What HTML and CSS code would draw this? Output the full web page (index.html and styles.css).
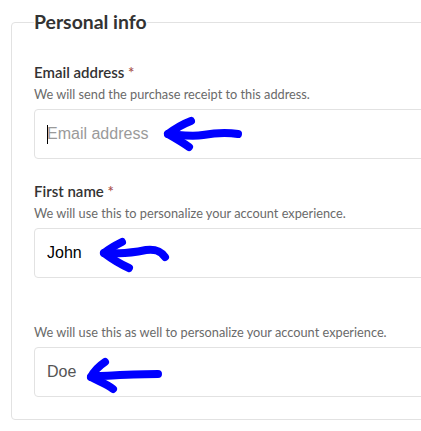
FILE: index.html
```html
<!DOCTYPE html>
<html lang="en">
<head>
<meta charset="utf-8">
<title>Personal info</title>
<link rel="stylesheet" href="styles.css">
</head>
<body>
<div class="page">
  <fieldset class="panel">
    <legend class="panel-title">Personal info</legend>

    <div class="field">
      <label class="field-label" for="email">Email address <span class="req">*</span></label>
      <p class="field-help">We will send the purchase receipt to this address.</p>
      <div class="input-wrap">
        <input class="text-input" id="email" type="email" placeholder="Email address">
        <span class="caret"></span>
      </div>
    </div>

    <div class="field">
      <label class="field-label" for="first">First name <span class="req">*</span></label>
      <p class="field-help">We will use this to personalize your account experience.</p>
      <div class="input-wrap">
        <input class="text-input filled" id="first" type="text" value="John">
      </div>
    </div>

    <div class="field">
      <label class="field-label" for="last"></label>
      <p class="field-help">We will use this as well to personalize your account experience.</p>
      <div class="input-wrap">
        <input class="text-input muted" id="last" type="text" value="Doe">
      </div>
    </div>
  </fieldset>

  <svg class="annotations" width="421" height="431" viewBox="0 0 421 431" aria-hidden="true">
    <g fill="none" stroke="#0000ff" stroke-width="8" stroke-linecap="round" stroke-linejoin="round">
      <path d="M238 134 C226 132 214 133 203 135 C192 137 180 135 168 134"/>
      <path d="M191 121 C183 124 176 128 168 134 C175 138 182 142 189 147"/>
      <path d="M165 257 C160 250 154 249 146 250 C136 252 125 254 114 253 L104 253"/>
      <path d="M122 242 C116 245 110 248 104 253 C112 259 120 264 129 268"/>
      <path d="M158 374 C140 374 122 375 98 376 L91 377"/>
      <path d="M105 362 C99 366 94 371 91 377 C98 381 107 384 113 389"/>
    </g>
  </svg>
</div>
</body>
</html>
```

FILE: styles.css
```css
html, body {
  margin: 0;
  padding: 0;
  background: #ffffff;
  overflow: hidden;
}

.page {
  position: relative;
  width: 421px;
  height: 431px;
  overflow: hidden;
  font-family: Lato, "Open Sans", sans-serif;
}

.panel {
  box-sizing: border-box;
  width: 460px;
  margin: 10px 0 0 11px;
  padding: 28px 22px 22px 22px;
  border: 1px solid #e2e2e2;
  border-radius: 4px;
  min-width: 0;
}

.panel-title {
  padding: 0;
  margin-left: 0;
  font-size: 19.4px;
  line-height: 24px;
  font-weight: 700;
  color: #333333;
}

.field + .field {
  margin-top: 22px;
}

.field-label {
  display: block;
  min-height: 20px;
  font-size: 15px;
  line-height: 20px;
  font-weight: 600;
  color: #333333;
}

.req {
  color: #a9524b;
}

.field-help {
  margin: 3px 0 0 0;
  font-size: 12.75px;
  line-height: 18px;
  color: #6a6a6a;
}

.input-wrap {
  position: relative;
  margin-top: 6px;
}

.text-input {
  box-sizing: border-box;
  display: block;
  width: 100%;
  height: 50px;
  margin: 0;
  padding: 0 12px;
  border: 1px solid #e2e2e2;
  border-radius: 4px;
  background: #ffffff;
  font-family: "Liberation Sans", Arial, sans-serif;
  font-size: 16px;
  color: #000000;
  outline: none;
}

.text-input::placeholder {
  color: #9a9a9a;
}

.text-input.muted {
  color: #555555;
}

.caret {
  position: absolute;
  left: 13px;
  top: 16px;
  width: 1px;
  height: 19px;
  background: #000000;
}

.annotations {
  position: absolute;
  left: 0;
  top: 0;
  pointer-events: none;
}
```
